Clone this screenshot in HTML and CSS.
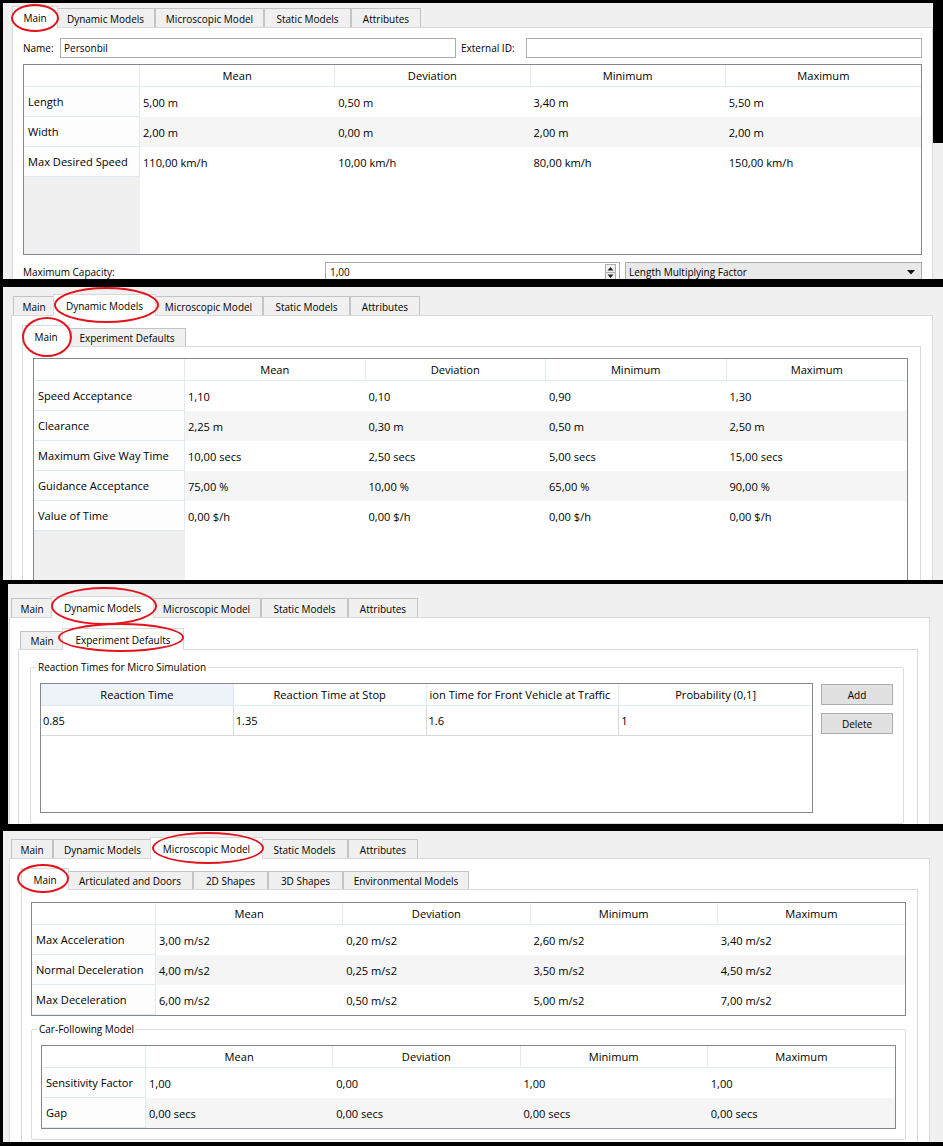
FILE: index.html
```html
<!DOCTYPE html>
<html>
<head>
<meta charset="utf-8">
<title>Vehicle Type Editor</title>
<link rel="stylesheet" href="styles.css">
</head>
<body>
<div class="page">

<section class="shot s1">
  <div class="tabbar tb1">
    <div class="tab on t-main">Main<span class="ring ring-p1"></span></div>
    <div class="tab t-dyn">Dynamic Models</div>
    <div class="tab t-micro">Microscopic Model</div>
    <div class="tab t-static">Static Models</div>
    <div class="tab t-attr">Attributes</div>
  </div>
  <div class="pane pane1">
    <div class="idrow">
      <span class="lbl-name">Name:</span>
      <div class="field">Personbil</div>
      <span class="lbl-ext">External ID:</span>
      <div class="field"></div>
    </div>
    <div class="view view-veh">
      <table>
        <colgroup><col class="rh-veh"><col><col><col><col></colgroup>
        <thead><tr><th></th><th>Mean</th><th>Deviation</th><th>Minimum</th><th>Maximum</th></tr></thead>
        <tbody>
          <tr><td class="h">Length</td><td>5,00 m</td><td>0,50 m</td><td>3,40 m</td><td>5,50 m</td></tr>
          <tr class="alt"><td class="h">Width</td><td>2,00 m</td><td>0,00 m</td><td>2,00 m</td><td>2,00 m</td></tr>
          <tr><td class="h">Max Desired Speed</td><td>110,00 km/h</td><td>10,00 km/h</td><td>80,00 km/h</td><td>150,00 km/h</td></tr>
        </tbody>
      </table>
    </div>
    <div class="caprow">
      <span class="lbl-cap">Maximum Capacity:</span>
      <div class="spin">
        <span>1,00</span>
        <svg class="spinbtn" width="11" height="17" viewBox="0 0 11 17"><rect x="0.5" y="0.5" width="10" height="16" fill="#f0f0f0" stroke="#adadad"/><line x1="0" y1="8.5" x2="11" y2="8.5" stroke="#adadad"/><path d="M2.5 6.5h6L5.5 3z" fill="#222"/><path d="M2.5 10.5h6l-3 3.5z" fill="#222"/></svg>
      </div>
      <div class="combo">
        <span>Length Multiplying Factor</span>
        <svg class="arrow" width="8" height="5" viewBox="0 0 8 5"><path d="M0 0h8L4 4.5z" fill="#111"/></svg>
      </div>
    </div>
  </div>
</section>

<section class="shot s2">
  <div class="tabbar tb2">
    <div class="tab t-main">Main</div>
    <div class="tab on t-dyn">Dynamic Models<span class="ring ring-p2a"></span></div>
    <div class="tab t-micro">Microscopic Model</div>
    <div class="tab t-static">Static Models</div>
    <div class="tab t-attr">Attributes</div>
  </div>
  <div class="pane pane2">
    <div class="tabbar sub sub2">
      <div class="tab on t-smain">Main<span class="ring ring-p2b"></span></div>
      <div class="tab t-exp">Experiment Defaults</div>
    </div>
    <div class="pane inner2">
      <div class="view view-dyn">
        <table>
          <colgroup><col class="rh-dyn"><col><col><col><col></colgroup>
          <thead><tr><th></th><th>Mean</th><th>Deviation</th><th>Minimum</th><th>Maximum</th></tr></thead>
          <tbody>
            <tr><td class="h">Speed Acceptance</td><td>1,10</td><td>0,10</td><td>0,90</td><td>1,30</td></tr>
            <tr class="alt"><td class="h">Clearance</td><td>2,25 m</td><td>0,30 m</td><td>0,50 m</td><td>2,50 m</td></tr>
            <tr><td class="h">Maximum Give Way Time</td><td>10,00 secs</td><td>2,50 secs</td><td>5,00 secs</td><td>15,00 secs</td></tr>
            <tr class="alt"><td class="h">Guidance Acceptance</td><td>75,00 %</td><td>10,00 %</td><td>65,00 %</td><td>90,00 %</td></tr>
            <tr><td class="h">Value of Time</td><td>0,00 $/h</td><td>0,00 $/h</td><td>0,00 $/h</td><td>0,00 $/h</td></tr>
          </tbody>
        </table>
      </div>
    </div>
  </div>
</section>

<section class="shot s3">
  <div class="tabbar tb3">
    <div class="tab t-main">Main</div>
    <div class="tab on t-dyn">Dynamic Models<span class="ring ring-p3a"></span></div>
    <div class="tab t-micro">Microscopic Model</div>
    <div class="tab t-static">Static Models</div>
    <div class="tab t-attr">Attributes</div>
  </div>
  <div class="pane pane3">
    <div class="tabbar sub sub3">
      <div class="tab t-smain">Main</div>
      <div class="tab on t-exp">Experiment Defaults<span class="ring ring-p3b"></span></div>
    </div>
    <div class="pane inner3">
      <fieldset class="group group-rt">
        <legend>Reaction Times for Micro Simulation</legend>
        <div class="rt-body">
          <div class="view view-rt">
            <table class="gridlines">
              <thead><tr><th class="cur">Reaction Time</th><th>Reaction Time at Stop</th><th class="clip">ion Time for Front Vehicle at Traffic</th><th>Probability (0,1]</th></tr></thead>
              <tbody>
                <tr><td>0.85</td><td>1.35</td><td>1.6</td><td>1</td></tr>
              </tbody>
            </table>
          </div>
          <div class="btns">
            <button class="btn">Add</button>
            <button class="btn">Delete</button>
          </div>
        </div>
      </fieldset>
    </div>
  </div>
</section>

<section class="shot s4">
  <div class="tabbar tb4">
    <div class="tab t-main">Main</div>
    <div class="tab t-dyn">Dynamic Models</div>
    <div class="tab on t-micro">Microscopic Model<span class="ring ring-p4a"></span></div>
    <div class="tab t-static">Static Models</div>
    <div class="tab t-attr">Attributes</div>
  </div>
  <div class="pane pane4">
    <div class="tabbar sub sub4">
      <div class="tab on t-smain">Main<span class="ring ring-p4b"></span></div>
      <div class="tab t-art">Articulated and Doors</div>
      <div class="tab t-2d">2D Shapes</div>
      <div class="tab t-3d">3D Shapes</div>
      <div class="tab t-env">Environmental Models</div>
    </div>
    <div class="pane inner4">
      <div class="view view-micro">
        <table>
          <colgroup><col class="rh-micro"><col><col><col><col></colgroup>
          <thead><tr><th></th><th>Mean</th><th>Deviation</th><th>Minimum</th><th>Maximum</th></tr></thead>
          <tbody>
            <tr><td class="h">Max Acceleration</td><td>3,00 m/s2</td><td>0,20 m/s2</td><td>2,60 m/s2</td><td>3,40 m/s2</td></tr>
            <tr class="alt"><td class="h">Normal Deceleration</td><td>4,00 m/s2</td><td>0,25 m/s2</td><td>3,50 m/s2</td><td>4,50 m/s2</td></tr>
            <tr><td class="h">Max Deceleration</td><td>6,00 m/s2</td><td>0,50 m/s2</td><td>5,00 m/s2</td><td>7,00 m/s2</td></tr>
          </tbody>
        </table>
      </div>
      <fieldset class="group group-cf">
        <legend>Car-Following Model</legend>
        <div class="view view-cf">
          <table>
            <colgroup><col class="rh-cf"><col><col><col><col></colgroup>
            <thead><tr><th></th><th>Mean</th><th>Deviation</th><th>Minimum</th><th>Maximum</th></tr></thead>
            <tbody>
              <tr><td class="h">Sensitivity Factor</td><td>1,00</td><td>0,00</td><td>1,00</td><td>1,00</td></tr>
              <tr class="alt"><td class="h">Gap</td><td>0,00 secs</td><td>0,00 secs</td><td>0,00 secs</td><td>0,00 secs</td></tr>
            </tbody>
          </table>
        </div>
      </fieldset>
    </div>
  </div>
</section>

</div>
</body>
</html>
```

FILE: styles.css
```css
* { box-sizing: border-box; }

html, body { margin: 0; padding: 0; }

body {
  background: #f0f0f0;
  font-family: "Segoe UI", "Open Sans", sans-serif;
  font-size: 10px;
  color: #000;
}

.page {
  width: 943px;
  height: 1146px;
  overflow: hidden;
  display: flex;
  flex-direction: column;
}

/* ---------- screenshot frames ---------- */
.shot {
  position: relative;
  flex: none;
  background: #f0f0f0;
  border: 0 solid #000;
  overflow: hidden;
  display: flex;
  flex-direction: column;
}
.s1 { height: 283px; border-width: 3px 0 4px 3px; }
.s1::after {
  content: "";
  position: absolute;
  top: 0;
  right: 0;
  width: 10px;
  height: 140px;
  background: #000;
}
.s2 { height: 301px; border-width: 4px 0 4px 3px; }
.s3 { height: 244px; border-width: 0 0 4px 8px; }
.s4 { height: 318px; border-width: 3px 0 4px 3px; }

/* ---------- tabs ---------- */
.tabbar {
  flex: none;
  display: flex;
  align-items: flex-end;
}
.tb1 { height: 24px; padding-left: 11px; }
.tb2 { height: 28px; padding-left: 10px; }
.tb3 { height: 33px; padding-left: 3px; }
.tb4 { height: 27px; padding-left: 8px; }

.sub { height: 30px; padding-left: 2px; }
.sub3 { height: 31px; }

.tab {
  position: relative;
  flex: none;
  height: 19px;
  border: 1px solid #c4c4c4;
  border-bottom: 0;
  background: #f0f0f0;
  display: flex;
  align-items: center;
  justify-content: center;
  white-space: nowrap;
  padding-top: 1px;
}
.sub .tab { height: 18px; }
.tab.on,
.sub .tab.on {
  height: 22px;
  margin: 0 -2px -1px;
  background: #fff;
  border-color: #d9d9d9;
  z-index: 2;
  padding-top: 0;
}

.t-main { width: 42px; }
.t-main.on { width: 46px; }
.t-dyn { width: 99px; }
.t-dyn.on { width: 103px; }
.t-micro { width: 109px; }
.t-micro.on { width: 113px; }
.t-static { width: 87px; }
.t-attr { width: 70px; }
.t-smain { width: 44px; }
.t-smain.on { width: 48px; }
.t-exp { width: 118px; }
.t-exp.on { width: 122px; }
.t-art { width: 126px; }
.t-2d { width: 75px; }
.t-3d { width: 75px; }
.t-env { width: 126px; }

/* red annotation ellipses */
.ring {
  position: absolute;
  border: 2px solid #e3141c;
  border-radius: 50%;
  pointer-events: none;
}
.ring-p1  { left: -2px; top: -3px; width: 48px;  height: 28px; }
.ring-p2a { left: 0;    top: -8px; width: 105px; height: 36px; }
.ring-p2b { left: -1px; top: -9px; width: 50px;  height: 40px; }
.ring-p3a { left: -1px; top: -10px; width: 106px; height: 38px; }
.ring-p3b { left: -5px; top: -6px; width: 126px; height: 29px; }
.ring-p4a { left: 1px;  top: -6px; width: 112px; height: 32px; }
.ring-p4b { left: -5px; top: -5px; width: 52px;  height: 29px; }

/* ---------- panes ---------- */
.pane {
  flex: 1 0 auto;
  margin-bottom: -20px;
  background: #fff;
  border: 1px solid #d9d9d9;
  display: flex;
  flex-direction: column;
}
.pane1 { margin-left: 9px; margin-right: 10px; padding: 10px 10px 0 10px; }
.pane2 { margin-left: 8px; margin-right: 10px; padding: 0 11px 0 10px; }
.pane3 { margin-left: 1px; margin-right: 13px; padding: 0 11px 0 8px; }
.pane4 { margin-left: 6px; margin-right: 13px; padding: 0 11px 0 11px; }

.inner2 { padding: 11px 12px 0 10px; }
.inner3 { padding: 0 13px 0 11px; }
.inner4 { padding: 12px 11px 0 9px; }

/* ---------- panel 1 form ---------- */
.idrow {
  display: flex;
  align-items: center;
  height: 20px;
}
.lbl-name { width: 37px; }
.lbl-ext { width: 65px; margin-left: 5px; }
.field {
  flex: 1;
  height: 20px;
  border: 1px solid #abadb3;
  background: #fff;
  padding: 0 3px;
  display: flex;
  align-items: center;
}

.caprow {
  display: flex;
  align-items: center;
  margin-top: 7px;
  height: 20px;
  flex: none;
}
.lbl-cap { width: 302px; }
.spin {
  flex: 1;
  height: 20px;
  border: 1px solid #abadb3;
  background: #fff;
  display: flex;
  align-items: center;
  justify-content: space-between;
  padding: 0 3px 0 4px;
}
.spinbtn { display: block; }
.combo {
  flex: 1;
  margin-left: 5px;
  height: 20px;
  border: 1px solid #acacac;
  background: #e9e9e9;
  display: flex;
  align-items: center;
  justify-content: space-between;
  padding: 0 6px 0 3px;
}
.arrow { display: block; }

/* ---------- item views ---------- */
.view {
  flex: none;
  border: 1px solid #828790;
  background: #fff;
  overflow: hidden;
  font-size: 11.1px;
}
.view-veh { margin-top: 6px; height: 191px; background: linear-gradient(90deg, #f0f0f0 116px, #fff 116px); }
.view-dyn { height: 240px; background: linear-gradient(90deg, #f0f0f0 151px, #fff 151px); }
.view-micro { background: linear-gradient(90deg, #f0f0f0 124px, #fff 124px); }
.view-cf { background: linear-gradient(90deg, #f0f0f0 104px, #fff 104px); }
.view-rt { flex: 1; height: 130px; }

.rh-veh { width: 116px; }
.rh-dyn { width: 151px; }
.rh-micro { width: 124px; }
.rh-cf { width: 104px; }

table {
  width: 100%;
  border-spacing: 0;
  table-layout: fixed;
  font-size: inherit;
}
thead tr { height: 22px; }
tbody tr { height: 30px; }

th {
  font-weight: normal;
  text-align: center;
  background: #fff;
  border-right: 1px solid #e3e9f3;
  border-bottom: 1px solid #e3e9f3;
  padding: 0 4px;
  white-space: nowrap;
  overflow: hidden;
}
th:last-child { border-right: 0; }

td {
  padding: 0 3px;
  white-space: nowrap;
  overflow: hidden;
  text-align: left;
}
td.h {
  background: #fdfdfe;
  border-right: 1px solid #e3e9f3;
  border-bottom: 1px solid #e3e9f3;
  padding-left: 4px;
}
tr.alt td:not(.h) { background: #f5f5f5; }

.gridlines th.cur { background: #eef3fa; }
.gridlines th.clip { text-align: left; padding-left: 3px; }
.gridlines td {
  border-right: 1px solid #d8d8d8;
  border-bottom: 1px solid #d8d8d8;
  padding-left: 2px;
}
.gridlines td:last-child { border-right: 0; }

/* ---------- group boxes ---------- */
.group {
  flex: none;
  margin: 0;
  min-width: 0;
  border: 1px solid #dcdcdc;
  border-radius: 2px;
}
.group legend {
  padding: 0 2px;
  margin-left: -4px;
  line-height: 14px;
}
.group-rt { margin-top: 10px; padding: 9px 10px 10px 9px; }
.group-cf { margin-top: 6px; padding: 9px 9px 10px 9px; }

.rt-body {
  display: flex;
  align-items: flex-start;
  gap: 8px;
}
.btns {
  display: flex;
  flex-direction: column;
  gap: 8px;
  padding-top: 1px;
}
.btn {
  width: 72px;
  height: 21px;
  background: #e1e1e1;
  border: 1px solid #adadad;
  font: inherit;
  color: #000;
  padding: 0;
}
```
